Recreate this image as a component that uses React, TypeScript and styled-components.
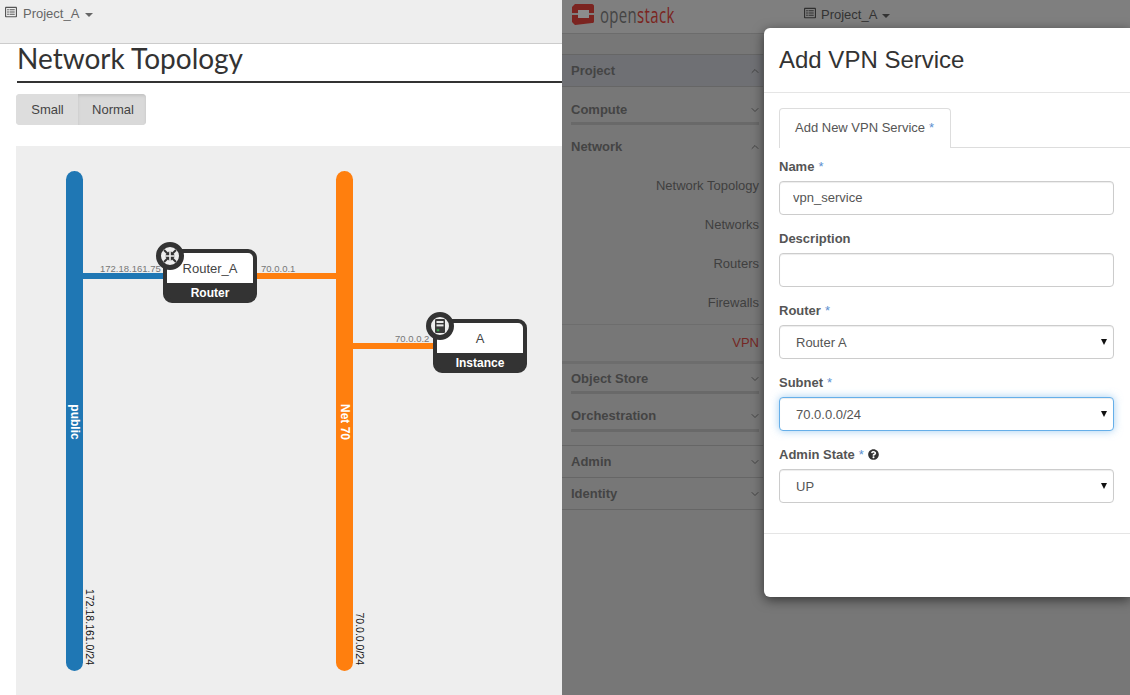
import { FC, ReactNode } from "react";
import styled, { createGlobalStyle } from "styled-components";
import { FaQuestionCircle, FaRegListAlt } from "react-icons/fa";
import { ChevronDown, ChevronUp } from "lucide-react";

const BLUE = "#1f77b4";
const ORANGE = "#ff7f0e";
const NODE_DARK = "#333333";

const GlobalStyle = createGlobalStyle`
  html, body {
    margin: 0;
    padding: 0;
    background: #ffffff;
    font-family: "Liberation Sans", Arial, sans-serif;
    font-size: 13px;
  }
  * {
    box-sizing: border-box;
  }
`;

const Page = styled.div`
  display: flex;
  width: 1130px;
  height: 695px;
  overflow: hidden;
`;

/* left pane */

const LeftPane = styled.div`
  display: flex;
  flex-direction: column;
  width: 562px;
  flex: none;
  overflow: hidden;
`;

const LeftTopBar = styled.div`
  display: flex;
  align-items: flex-start;
  gap: 6px;
  height: 44px;
  padding: 6px 0 0 5px;
  background: #eeeeee;
  border-bottom: 1px solid #cccccc;
  color: #666666;
  line-height: 16px;
`;

const Caret = styled.span<{ $color: string }>`
  width: 0;
  height: 0;
  margin-top: 7px;
  border-left: 4px solid transparent;
  border-right: 4px solid transparent;
  border-top: 4px solid ${(p) => p.$color};
`;

const PageTitle = styled.h1`
  margin: 0 0 0 17px;
  height: 39px;
  border-bottom: 2px solid #333333;
  font-family: Lato, "Open Sans", sans-serif;
  font-size: 28px;
  font-weight: 400;
  line-height: 29px;
  color: #333333;
  white-space: nowrap;
`;

const ButtonGroup = styled.div`
  display: flex;
  align-self: flex-start;
  margin: 11px 0 0 16px;
  height: 31px;
  border-radius: 4px;
  overflow: hidden;
  background: #dddddd;
`;

const SizeButton = styled.div<{ $active?: boolean }>`
  display: flex;
  align-items: center;
  justify-content: center;
  width: ${(p) => (p.$active ? 68 : 62)}px;
  padding-left: ${(p) => (p.$active ? 2 : 1)}px;
  color: #444444;
  background: ${(p) => (p.$active ? "#d9d9d9" : "#dddddd")};
  box-shadow: ${(p) =>
    p.$active ? "inset 0 2px 3px rgba(0, 0, 0, 0.1)" : "none"};
`;

const Canvas = styled.div`
  position: relative;
  margin: 21px 0 0 16px;
  flex: 1;
  background: #eeeeee;
`;

const NetworkBar = styled.div<{ $x: number; $color: string }>`
  position: absolute;
  left: ${(p) => p.$x}px;
  top: 25px;
  width: 17px;
  height: 500px;
  border-radius: 9px;
  background: ${(p) => p.$color};
`;

const NetworkName = styled.span`
  position: absolute;
  left: 50%;
  top: 251px;
  transform: translate(-50%, -50%) rotate(90deg);
  color: #ffffff;
  font-size: 12px;
  font-weight: 700;
  white-space: nowrap;
`;

const Cidr = styled.span<{ $x: number }>`
  position: absolute;
  left: ${(p) => p.$x}px;
  top: 519px;
  transform-origin: 0 0;
  transform: rotate(90deg) translateX(-100%);
  color: #111111;
  font-size: 10.5px;
  line-height: 14px;
  white-space: nowrap;
`;

const Link = styled.div<{ $x: number; $y: number; $w: number; $color: string }>`
  position: absolute;
  left: ${(p) => p.$x}px;
  top: ${(p) => p.$y}px;
  width: ${(p) => p.$w}px;
  height: 6px;
  background: ${(p) => p.$color};
`;

const PortIp = styled.span<{ $x: number; $y: number }>`
  position: absolute;
  left: ${(p) => p.$x}px;
  top: ${(p) => p.$y}px;
  color: #777777;
  font-size: 9.5px;
  line-height: 12px;
  white-space: nowrap;
`;

const Node = styled.div<{ $x: number; $y: number }>`
  position: absolute;
  left: ${(p) => p.$x}px;
  top: ${(p) => p.$y}px;
  display: flex;
  flex-direction: column;
  width: 94px;
  height: 54px;
  border: 4px solid ${NODE_DARK};
  border-radius: 9px;
  background: ${NODE_DARK};
`;

const NodeName = styled.div`
  display: flex;
  flex: none;
  align-items: center;
  justify-content: center;
  height: 30px;
  border-radius: 5px 5px 0 0;
  background: #ffffff;
  color: #444444;
  font-size: 13px;
  padding-top: 1px;
`;

const NodeType = styled.div`
  display: flex;
  flex: none;
  align-items: center;
  justify-content: center;
  height: 20px;
  color: #ffffff;
  font-size: 12px;
  font-weight: 700;
`;

const NodeBadge = styled.div`
  position: absolute;
  left: -11px;
  top: -11px;
  display: flex;
  align-items: center;
  justify-content: center;
  width: 28px;
  height: 28px;
  border: 5px solid ${NODE_DARK};
  border-radius: 50%;
  background: #eeeeee;
`;

const RouterIcon = () => (
  <svg width="14" height="14" viewBox="0 0 14 14">
    <g fill="none" stroke="#333333" strokeWidth="2">
      <path d="M1 1 L5 5" />
      <path d="M13 1 L9 5" />
      <path d="M1 13 L5 9" />
      <path d="M13 13 L9 9" />
    </g>
    <g fill="#333333">
      <path d="M6.2 6.2 V2.2 L2.2 6.2 Z" />
      <path d="M7.8 6.2 V2.2 L11.8 6.2 Z" />
      <path d="M6.2 7.8 V11.8 L2.2 7.8 Z" />
      <path d="M7.8 7.8 V11.8 L11.8 7.8 Z" />
    </g>
  </svg>
);

const ServerIcon = () => (
  <svg width="10" height="14" viewBox="0 0 10 14">
    <rect x="0" y="0" width="10" height="14" rx="1.2" fill="#3a3a3a" />
    <rect x="1.5" y="2" width="7" height="2" fill="#e8e8e8" />
    <rect x="1.5" y="5.4" width="7" height="2" fill="#e8e8e8" />
    <rect x="1.8" y="10.2" width="2.4" height="2" fill="#3fa34d" />
  </svg>
);

/* right pane, dimmed by the modal backdrop */

const RightPane = styled.div`
  position: relative;
  flex: 1;
  background: #777777;
  overflow: hidden;
`;

const TopBar = styled.div`
  display: flex;
  align-items: center;
  height: 34px;
  padding-left: 10px;
  background: #7f7f7f;
  border-bottom: 1px solid #6c6c6c;
`;

const Logo = styled.div`
  display: flex;
  align-items: center;
  gap: 6px;
  width: 232px;
  margin-top: -6px;
`;

const LogoText = styled.span`
  display: inline-block;
  transform: scaleX(0.68);
  transform-origin: 0 50%;
  font-family: "Open Sans", sans-serif;
  font-size: 22px;
  letter-spacing: 0.5px;
  line-height: 24px;
  color: #444444;

  & > b {
    font-weight: 400;
    color: #7b2420;
  }
`;

const ProjectMenu = styled.div`
  display: flex;
  align-items: flex-start;
  gap: 5px;
  margin-top: -4px;
  color: #333333;
  line-height: 16px;
`;

const Sidebar = styled.nav`
  margin-top: 20px;
  width: 201px;

  & svg {
    margin-right: -2px;
  }
`;

const TopSection = styled.div<{ $active?: boolean }>`
  display: flex;
  align-items: center;
  justify-content: space-between;
  height: 33px;
  margin-top: ${(p) => (p.$active ? 0 : -1)}px;
  padding: 0 4px 0 9px;
  border-top: 1px solid #666666;
  border-bottom: 1px solid #666666;
  background: ${(p) => (p.$active ? "#6f7074" : "transparent")};
  color: #444444;
  font-weight: 700;
  font-size: 13px;
`;

const SubSection = styled.div<{ $top: number; $bottom: number; $rule?: boolean }>`
  display: flex;
  align-items: center;
  justify-content: space-between;
  margin: 0 4px 0 9px;
  padding: ${(p) => p.$top}px 0 ${(p) => p.$bottom}px;
  border-bottom: ${(p) => (p.$rule ? "3px solid #696969" : "none")};
  color: #444444;
  font-weight: 700;
  font-size: 13px;
  line-height: 20px;
`;

const NavItem = styled.div<{ $current?: boolean }>`
  display: flex;
  align-items: center;
  justify-content: flex-end;
  height: ${(p) => (p.$current ? 40 : 39)}px;
  margin-top: ${(p) => (p.$current ? 2 : 0)}px;
  padding: ${(p) => (p.$current ? "0 4px 1px 0" : "0 4px 0 0")};
  border-top: ${(p) => (p.$current ? "1px solid #6d6d6d" : "none")};
  border-bottom: ${(p) => (p.$current ? "3px solid #6d6d6d" : "none")};
  color: ${(p) => (p.$current ? "#742724" : "#3f3f3f")};
`;

const AdminSpacer = styled.div`
  height: 14px;
`;

const Modal = styled.div`
  position: absolute;
  left: 202px;
  top: 28px;
  right: 0;
  height: 569px;
  background: #ffffff;
  border-radius: 6px 0 0 6px;
  box-shadow: 0 3px 12px rgba(0, 0, 0, 0.55);
`;

const ModalHeader = styled.div`
  display: flex;
  align-items: center;
  height: 65px;
  padding: 0 15px;
  border-bottom: 1px solid #e5e5e5;
`;

const ModalTitle = styled.h3`
  margin: 0;
  font-size: 24px;
  font-weight: 400;
  color: #333333;
`;

const ModalBody = styled.div`
  height: 441px;
  padding: 15px 16px 0 15px;
  border-bottom: 1px solid #e5e5e5;
`;

const TabBar = styled.div`
  display: flex;
  height: 40px;
  margin-right: -16px;
  margin-bottom: 8px;
  border-bottom: 1px solid #dddddd;
`;

const Tab = styled.div`
  display: flex;
  align-items: center;
  width: 172px;
  height: 40px;
  padding: 0 0 3px 15px;
  background: #ffffff;
  border: 1px solid #dddddd;
  border-bottom: none;
  border-radius: 4px 4px 0 0;
  color: #555555;
  white-space: nowrap;
`;

const Required = styled.span`
  margin-left: 4px;
  color: #5b8fd0;
  font-weight: 400;
`;

const Field = styled.div`
  margin-bottom: 13px;
`;

const Label = styled.label`
  display: flex;
  align-items: center;
  height: 20px;
  margin-bottom: 5px;
  color: #555555;
  font-weight: 700;
  font-size: 13px;

  & > svg {
    margin-left: 4px;
    color: #333333;
  }
`;

const TextInput = styled.input`
  display: block;
  width: 100%;
  height: 34px;
  padding: 0 13px 2px;
  border: 1px solid #cccccc;
  border-radius: 4px;
  background: #ffffff;
  box-shadow: inset 0 1px 1px rgba(0, 0, 0, 0.075);
  color: #555555;
  font: inherit;
  outline: none;
`;

const SelectWrap = styled.div`
  position: relative;
`;

const NativeSelect = styled.select<{ $focused?: boolean }>`
  display: block;
  width: 100%;
  height: 34px;
  padding: 0 16px;
  appearance: none;
  border: 1px solid ${(p) => (p.$focused ? "#66afe9" : "#cccccc")};
  border-radius: 4px;
  background: #ffffff;
  box-shadow: ${(p) =>
    p.$focused
      ? "inset 0 1px 1px rgba(0,0,0,.075), 0 0 8px rgba(102,175,233,.6)"
      : "inset 0 1px 1px rgba(0,0,0,.075)"};
  color: #555555;
  font: inherit;
  outline: none;
`;

const SelectCaret = styled.span`
  position: absolute;
  right: 7px;
  top: 14px;
  width: 0;
  height: 0;
  border-left: 3px solid transparent;
  border-right: 3px solid transparent;
  border-top: 6px solid #111111;
  pointer-events: none;
`;

const SelectField: FC<{ label: ReactNode; value: string; focused?: boolean }> = ({
  label,
  value,
  focused,
}) => (
  <Field>
    <Label>{label}</Label>
    <SelectWrap>
      <NativeSelect $focused={focused} defaultValue={value}>
        <option>{value}</option>
      </NativeSelect>
      <SelectCaret />
    </SelectWrap>
  </Field>
);

const OpenStackMark = () => (
  <svg width="22" height="22" viewBox="0 0 22 22">
    <path
      d="M3 1 L20 1 C21 1 22 2 22 3 V18 C22 20 21 20 20 20 L3 22 L0 19 V4 Z"
      fill="#7b2420"
    />
    <rect x="6" y="7" width="11" height="8" fill="#8c8c8c" />
    <rect x="0" y="10" width="6" height="2" fill="#7f7f7f" />
    <rect x="17" y="10" width="5" height="2" fill="#7f7f7f" />
  </svg>
);

const Section: FC<{ name: string; open?: boolean; active?: boolean }> = ({
  name,
  open,
  active,
}) => (
  <TopSection $active={active}>
    {name}
    {open ? (
      <ChevronUp size={12} strokeWidth={2} />
    ) : (
      <ChevronDown size={12} strokeWidth={2} />
    )}
  </TopSection>
);

const Sub: FC<{
  name: string;
  top: number;
  bottom: number;
  rule?: boolean;
  open?: boolean;
}> = ({ name, top, bottom, rule, open }) => (
  <SubSection $top={top} $bottom={bottom} $rule={rule}>
    {name}
    {open ? (
      <ChevronUp size={12} strokeWidth={2} />
    ) : (
      <ChevronDown size={12} strokeWidth={2} />
    )}
  </SubSection>
);

export default function App() {
  return (
    <Page>
      <GlobalStyle />
      <LeftPane>
        <LeftTopBar>
          <FaRegListAlt size={12} color="#555555" />
          <span>Project_A</span>
          <Caret $color="#666666" />
        </LeftTopBar>
        <PageTitle>Network Topology</PageTitle>
        <ButtonGroup>
          <SizeButton>Small</SizeButton>
          <SizeButton $active>Normal</SizeButton>
        </ButtonGroup>
        <Canvas>
          <NetworkBar $x={50} $color={BLUE}>
            <NetworkName>public</NetworkName>
          </NetworkBar>
          <NetworkBar $x={320} $color={ORANGE}>
            <NetworkName>Net 70</NetworkName>
          </NetworkBar>
          <Cidr $x={81}>172.18.161.0/24</Cidr>
          <Cidr $x={351}>70.0.0.0/24</Cidr>

          <Link $x={67} $y={127} $w={90} $color={BLUE} />
          <Link $x={235} $y={127} $w={85} $color={ORANGE} />
          <Link $x={337} $y={197} $w={85} $color={ORANGE} />
          <PortIp $x={84} $y={117}>172.18.161.75</PortIp>
          <PortIp $x={245} $y={117}>70.0.0.1</PortIp>
          <PortIp $x={379} $y={187}>70.0.0.2</PortIp>

          <Node $x={147} $y={103}>
            <NodeName>Router_A</NodeName>
            <NodeType>Router</NodeType>
            <NodeBadge>
              <RouterIcon />
            </NodeBadge>
          </Node>
          <Node $x={417} $y={173}>
            <NodeName>A</NodeName>
            <NodeType>Instance</NodeType>
            <NodeBadge>
              <ServerIcon />
            </NodeBadge>
          </Node>
        </Canvas>
      </LeftPane>

      <RightPane>
        <TopBar>
          <Logo>
            <OpenStackMark />
            <LogoText>
              open<b>stack</b>
            </LogoText>
          </Logo>
          <ProjectMenu>
            <FaRegListAlt size={12} color="#2f2f2f" />
            <span>Project_A</span>
            <Caret $color="#333333" />
          </ProjectMenu>
        </TopBar>
        <Sidebar>
          <Section name="Project" open active />
          <Sub name="Compute" top={13} bottom={2} rule />
          <Sub name="Network" top={12} bottom={9} open />
          <NavItem>Network Topology</NavItem>
          <NavItem>Networks</NavItem>
          <NavItem>Routers</NavItem>
          <NavItem>Firewalls</NavItem>
          <NavItem $current>VPN</NavItem>
          <Sub name="Object Store" top={5} bottom={2} rule />
          <Sub name="Orchestration" top={12} bottom={3} rule />
          <AdminSpacer />
          <Section name="Admin" />
          <Section name="Identity" />
        </Sidebar>

        <Modal>
          <ModalHeader>
            <ModalTitle>Add VPN Service</ModalTitle>
          </ModalHeader>
          <ModalBody>
            <TabBar>
              <Tab>
                Add New VPN Service<Required>*</Required>
              </Tab>
            </TabBar>
            <Field>
              <Label>
                Name<Required>*</Required>
              </Label>
              <TextInput defaultValue="vpn_service" />
            </Field>
            <Field>
              <Label>Description</Label>
              <TextInput />
            </Field>
            <SelectField
              label={
                <>
                  Router<Required>*</Required>
                </>
              }
              value="Router A"
            />
            <SelectField
              focused
              label={
                <>
                  Subnet<Required>*</Required>
                </>
              }
              value="70.0.0.0/24"
            />
            <SelectField
              label={
                <>
                  Admin State<Required>*</Required>
                  <FaQuestionCircle size={11} />
                </>
              }
              value="UP"
            />
          </ModalBody>
        </Modal>
      </RightPane>
    </Page>
  );
}
